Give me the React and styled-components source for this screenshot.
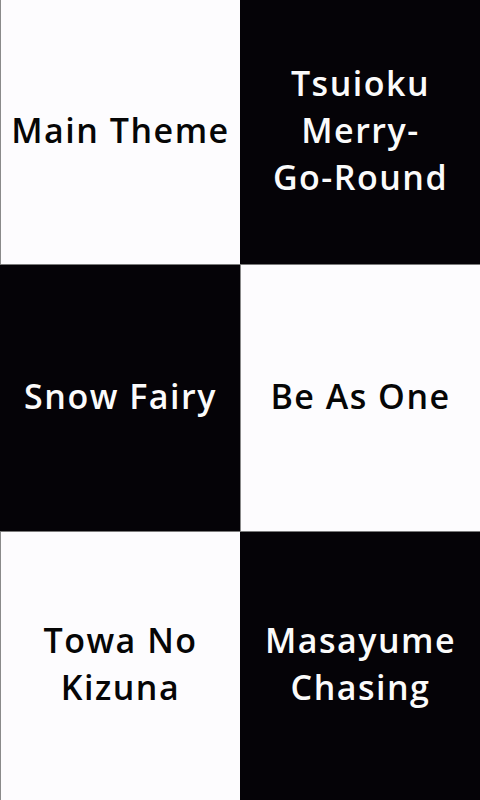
import React from "react";
import styled, { createGlobalStyle } from "styled-components";

const songs = [
  { lines: ["Main Theme"], dark: false },
  { lines: ["Tsuioku", "Merry-", "Go-Round"], dark: true },
  { lines: ["Snow Fairy"], dark: true },
  { lines: ["Be As One"], dark: false },
  { lines: ["Towa No", "Kizuna"], dark: false },
  { lines: ["Masayume", "Chasing"], dark: true },
];

const GlobalStyle = createGlobalStyle`
  html, body {
    margin: 0;
    padding: 0;
    height: 100%;
    background: #050307;
  }
  #root {
    height: 100%;
  }
`;

const Board = styled.div`
  display: grid;
  grid-template-columns: 1fr 1fr;
  grid-template-rows: 264px 266px 1fr;
  width: 480px;
  height: 800px;
  background: #7a7a7a;
  gap: 1px 0;
  box-sizing: border-box;
`;

const Tile = styled.div`
  display: flex;
  align-items: center;
  justify-content: center;
  padding: 0 4px;
  background: ${({ $dark }) => ($dark ? "#050307" : "#fdfcfe")};
  color: ${({ $dark }) => ($dark ? "#fbfbfb" : "#060606")};
  border-left: 1px solid ${({ $dark }) => ($dark ? "#050307" : "#8a8a8a")};
`;

const Title = styled.div`
  font-family: "Comic Sans MS", "Open Sans", "DejaVu Sans", sans-serif;
  font-weight: 600;
  font-size: 34px;
  line-height: 47px;
  text-align: center;
  letter-spacing: 1.5px;
  margin-top: -4px;
`;

const Line = styled.span`
  display: block;
  white-space: nowrap;
`;

export default function App() {
  return (
    <>
      <GlobalStyle />
      <Board>
        {songs.map((s) => (
          <Tile key={s.lines.join(" ")} $dark={s.dark}>
            <Title>
              {s.lines.map((l) => (
                <Line key={l}>{l}</Line>
              ))}
            </Title>
          </Tile>
        ))}
      </Board>
    </>
  );
}
